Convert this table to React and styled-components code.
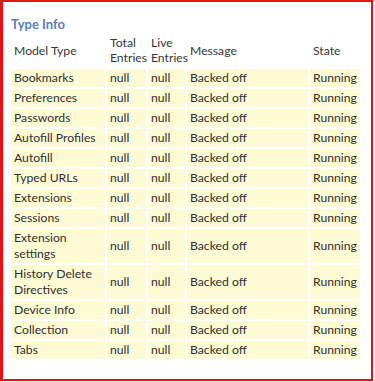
import React from 'react'
import styled, {createGlobalStyle} from 'styled-components'

const GlobalStyle = createGlobalStyle`
  html, body {
    margin: 0;
    padding: 0;
    background: #fff;
  }
`

const Frame = styled.div`
  box-sizing: border-box;
  width: 373px;
  height: 381px;
  border: 2px solid #e0141b;
  border-left-width: 3px;
  padding: 15px 0 0 6px;
  font-family: 'Segoe UI', Lato, 'Liberation Sans', sans-serif;
  font-size: 12.2px;
  color: #303030;
`

const Heading = styled.h3`
  margin: 0 0 0 2px;
  font-size: 13px;
  font-weight: 700;
  line-height: 14px;
  color: #5680b8;
`

const Table = styled.table`
  border-collapse: separate;
  border-spacing: 2px;
  table-layout: fixed;
  width: 353px;
`

const Th = styled.th`
  font-weight: 400;
  text-align: left;
  vertical-align: middle;
  line-height: 15px;
  padding: 2px 3px;
  color: #363636;
  width: ${({$w}) => $w}px;
`

const Td = styled.td`
  background: #fdfbd4;
  line-height: 16px;
  padding: 1px 3px;
  vertical-align: middle;
`

const rows = [
  'Bookmarks',
  'Preferences',
  'Passwords',
  'Autofill Profiles',
  'Autofill',
  'Typed URLs',
  'Extensions',
  'Sessions',
  'Extension settings',
  'History Delete Directives',
  'Device Info',
  'Collection',
  'Tabs',
]

const App = () => {
  return (
    <>
      <GlobalStyle />
      <Frame>
        <Heading>Type Info</Heading>
        <Table>
          <thead>
            <tr>
              <Th $w={88}>Model Type</Th>
              <Th $w={33}>Total Entries</Th>
              <Th $w={31}>Live Entries</Th>
              <Th $w={115}>Message</Th>
              <Th $w={44}>State</Th>
            </tr>
          </thead>
          <tbody>
            {rows.map((name) => (
              <tr key={name}>
                <Td>{name}</Td>
                <Td>null</Td>
                <Td>null</Td>
                <Td>Backed off</Td>
                <Td>Running</Td>
              </tr>
            ))}
          </tbody>
        </Table>
      </Frame>
    </>
  )
}

export default App
